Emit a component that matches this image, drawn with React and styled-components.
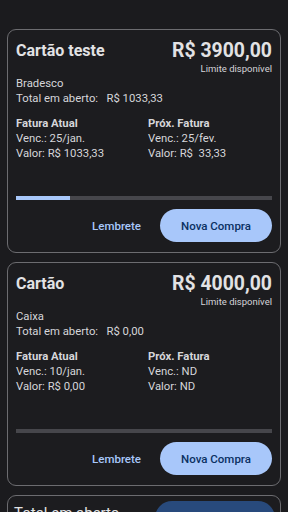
import React from "react";
import styled, { createGlobalStyle } from "styled-components";

const Global = createGlobalStyle`
  html, body {
    margin: 0;
    padding: 0;
    background: #1b1b1e;
  }
  body {
    font-family: Roboto, "Noto Sans", sans-serif;
    color: #e3e2e6;
    overflow: hidden;
  }
`;

const Page = styled.div`
  width: 288px;
  height: 512px;
  box-sizing: border-box;
  padding: 29px 7px 0;
  display: flex;
  flex-direction: column;
  gap: 9px;
  background: #1b1b1e;
  overflow: hidden;
`;

const Card = styled.div`
  box-sizing: border-box;
  height: ${(p) => p.h || 224}px;
  flex-shrink: 0;
  border: 1px solid #6c6c70;
  border-radius: 9px;
  padding: ${(p) => p.pad || "8px 8px 10px"};
  display: flex;
  flex-direction: column;
  background: #1c1c1f;
`;

const Header = styled.div`
  display: flex;
  justify-content: space-between;
  align-items: center;
  height: 24px;
`;

const Title = styled.div`
  font-size: 16px;
  font-weight: 700;
  color: #e2e2e4;
`;

const Amount = styled.div`
  font-size: 19.4px;
  font-weight: 700;
  color: #e2e2e4;
`;

const Caption = styled.div`
  text-align: right;
  font-size: 9.5px;
  line-height: 14px;
  color: #d4d4d8;
`;

const Line = styled.div`
  font-size: 11.3px;
  line-height: 15px;
  color: #d6d6da;
  font-weight: ${(p) => (p.bold ? 700 : 400)};
  white-space: pre;
`;

const Cols = styled.div`
  display: grid;
  grid-template-columns: 132px 1fr;
  margin-top: 10px;
`;

const Track = styled.div`
  margin-top: auto;
  height: 4px;
  background: #46464b;
  display: flex;
`;

const Fill = styled.div`
  height: 100%;
  background: #a8c7fa;
`;

const Actions = styled.div`
  display: flex;
  justify-content: flex-end;
  align-items: center;
  gap: 7px;
  margin-top: 9px;
`;

const TextButton = styled.button`
  border: none;
  background: transparent;
  color: #a8c7fa;
  font-family: Roboto, sans-serif;
  font-weight: 500;
  font-size: 11.5px;
  height: 33px;
  padding: 0 12px;
`;

const FilledButton = styled.button`
  border: none;
  background: ${(p) => (p.dark ? "#284a7c" : "#a8c7fa")};
  color: ${(p) => (p.dark ? "#d6e3ff" : "#0a3062")};
  font-family: Roboto, sans-serif;
  font-weight: 500;
  font-size: 11.5px;
  height: ${(p) => p.h || 33}px;
  width: ${(p) => p.w || 112}px;
  border-radius: 17px;
  padding: 0;
`;

const SummaryRow = styled.div`
  display: flex;
  justify-content: space-between;
  align-items: flex-start;
`;

const SummaryText = styled.div`
  font-size: 15px;
  color: #e2e2e4;
  margin-top: 3px;
`;

const cards = [
  {
    name: "Cartão teste",
    limit: "R$ 3900,00",
    bank: "Bradesco",
    open: "R$ 1033,33",
    used: 1033.33,
    total: 4933.33,
    cur: { venc: "25/jan.", valor: "R$ 1033,33" },
    next: { venc: "25/fev.", valor: "R$  33,33" },
  },
  {
    name: "Cartão",
    limit: "R$ 4000,00",
    bank: "Caixa",
    open: "R$ 0,00",
    used: 0,
    total: 4000,
    cur: { venc: "10/jan.", valor: "R$ 0,00" },
    next: { venc: "ND", valor: "ND" },
  },
];

const CreditCard = ({ c }) => (
  <Card>
    <Header>
      <Title>{c.name}</Title>
      <Amount>{c.limit}</Amount>
    </Header>
    <Caption>Limite disponível</Caption>
    <Line>{c.bank}</Line>
    <Line>{"Total em aberto:   " + c.open}</Line>
    <Cols>
      <div>
        <Line bold>Fatura Atual</Line>
        <Line>{"Venc.: " + c.cur.venc}</Line>
        <Line>{"Valor: " + c.cur.valor}</Line>
      </div>
      <div>
        <Line bold>Próx. Fatura</Line>
        <Line>{"Venc.: " + c.next.venc}</Line>
        <Line>{"Valor: " + c.next.valor}</Line>
      </div>
    </Cols>
    <Track>
      <Fill style={{ width: `${(c.used / c.total) * 100}%` }} />
    </Track>
    <Actions>
      <TextButton>Lembrete</TextButton>
      <FilledButton>Nova Compra</FilledButton>
    </Actions>
  </Card>
);

export default function App() {
  return (
    <Page>
      <Global />
      {cards.map((c) => (
        <CreditCard key={c.name} c={c} />
      ))}
      <Card h={60} pad="5px 5px 5px 6px">
        <SummaryRow>
          <SummaryText>Total em aberto</SummaryText>
          <FilledButton dark h={40} w={120}>
            Ver faturas
          </FilledButton>
        </SummaryRow>
      </Card>
    </Page>
  );
}
